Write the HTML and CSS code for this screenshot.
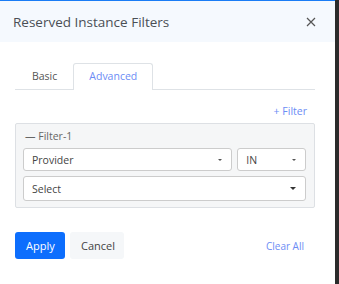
FILE: index.html
```html
<!DOCTYPE html>
<html lang="en">
<head>
  <meta charset="UTF-8" />
  <title>Reserved Instance Filters</title>
  <link rel="stylesheet" href="styles.css">
</head>
<body>
  <div class="panel">
    <div class="panel-header">
      <span class="title">Reserved Instance Filters</span>
      <svg class="close" width="10" height="10" viewBox="0 0 10 10">
        <path d="M1 1L9 9M9 1L1 9" stroke="#555" stroke-width="1.2" fill="none"/>
      </svg>
    </div>
    <div class="panel-body">
      <div class="tabs">
        <div class="tab">Basic</div>
        <div class="tab active">Advanced</div>
      </div>
      <div class="add-row"><span class="link">+ Filter</span></div>
      <div class="filter-box">
        <div class="filter-title">— Filter-1</div>
        <div class="row">
          <div class="select wide">Provider <span class="caret"></span></div>
          <div class="select small">IN <span class="caret"></span></div>
        </div>
        <div class="row">
          <div class="select full">Select <span class="caret big"></span></div>
        </div>
      </div>
      <div class="actions">
        <button class="btn primary">Apply</button>
        <button class="btn light">Cancel</button>
        <span class="link clear">Clear All</span>
      </div>
    </div>
  </div>
</body>
</html>
```

FILE: styles.css
```css
body {
  margin: 0;
  background: #2b2b2b;
  font-family: 'Open Sans', sans-serif;
  color: #444;
}
.panel {
  width: 335px;
  height: 284px;
  background: white;
  border-top: 1px solid #1a7cf5;
  box-sizing: border-box;
}
.panel-header {
  height: 41px;
  background: #f5f9fe;
  display: flex;
  align-items: center;
  justify-content: space-between;
  padding: 0 19px 0 13px;
}
.title {
  font-size: 13.5px;
  color: #4a4f55;
}
.panel-body {
  padding: 21px 20px 0 15px;
}
.tabs {
  display: flex;
  border-bottom: 1px solid #dee2e6;
  height: 26px;
  padding-left: 1px;
}
.tab {
  font-size: 10.5px;
  padding: 0 15px;
  line-height: 25px;
  color: #555;
  border: 1px solid transparent;
  border-bottom: none;
  border-radius: 3px 3px 0 0;
}
.tab.active {
  color: #6c8cf5;
  border-color: #dee2e6;
  background: white;
  margin-bottom: -1px;
  height: 26px;
}
.add-row {
  display: flex;
  justify-content: flex-end;
  padding: 14px 8px 0 0;
  height: 19px;
}
.link {
  color: #6c8cf5;
  font-size: 10.5px;
}
.filter-box {
  background: #f5f6f7;
  border: 1px solid #dde0e4;
  border-radius: 2px;
  padding: 6px 8px 6px 7px;
}
.filter-title {
  font-size: 10.5px;
  color: #666;
  margin: 0 0 5px 2px;
  line-height: 13px;
}
.row {
  display: flex;
  gap: 5px;
  margin-bottom: 5px;
}
.row:last-child {
  margin-bottom: 0;
}
.select {
  background: white;
  border: 1px solid #ccc;
  border-radius: 3px;
  height: 23px;
  box-sizing: border-box;
  display: flex;
  align-items: center;
  justify-content: space-between;
  padding: 0 9px 0 8px;
  font-size: 10.5px;
  color: #444;
}
.select.wide {
  width: 210px;
}
.select.small {
  width: 69px;
}
.select.full {
  width: 283px;
  height: 25px;
}
.caret {
  width: 0;
  height: 0;
  border-left: 2.5px solid transparent;
  border-right: 2.5px solid transparent;
  border-top: 2.5px solid #555;
}
.caret.big {
  border-left-width: 3.5px;
  border-right-width: 3.5px;
  border-top: 3.5px solid #333;
}
.actions {
  display: flex;
  align-items: center;
  margin-top: 24px;
}
.btn {
  height: 27px;
  border: none;
  border-radius: 3px;
  font-family: inherit;
  font-size: 11px;
  padding: 0 11px;
  margin-right: 5px;
}
.btn.primary {
  background: #0d6efd;
  color: white;
  width: 50px;
}
.btn.light {
  background: #f5f7f9;
  color: #444;
  width: 54px;
}
.clear {
  margin-left: auto;
  margin-right: 11px;
  font-size: 10px;
}
```
